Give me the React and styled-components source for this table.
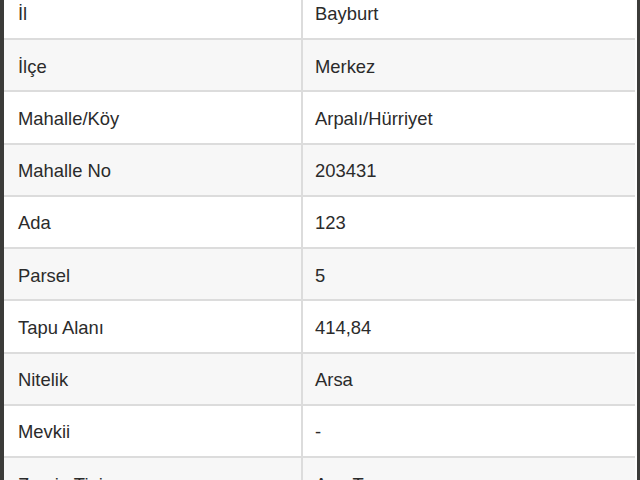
import React from 'react';
import styled, { createGlobalStyle } from 'styled-components';

const GlobalStyle = createGlobalStyle`
  html, body {
    margin: 0;
    padding: 0;
    background: #3b3b39;
    overflow: hidden;
  }
`;

const Frame = styled.div`
  width: 640px;
  height: 480px;
  box-sizing: border-box;
  padding: 0 3px 0 4px;
  overflow: hidden;
`;

const Table = styled.div`
  margin-top: -12.25px;
  background: #fdfdfd;
  font-family: 'Liberation Sans', Arial, sans-serif;
  font-size: 18.4px;
  color: #2b2b2b;
`;

const Row = styled.div`
  display: grid;
  grid-template-columns: 297px 1fr;
  height: 52.25px;
  box-sizing: border-box;
  border-bottom: 2px solid #dcdcdc;
  background: ${(p) => (p.$shaded ? '#f7f7f7' : '#ffffff')};
  margin-right: 2px;
`;

const Cell = styled.div`
  display: flex;
  align-items: center;
  padding-top: 3px;
  padding-left: ${(p) => (p.$value ? '12px' : '14px')};
  border-left: ${(p) => (p.$value ? '2px solid #dcdcdc' : 'none')};
  white-space: nowrap;
`;

const rows = [
  ['İl', 'Bayburt'],
  ['İlçe', 'Merkez'],
  ['Mahalle/Köy', 'Arpalı/Hürriyet'],
  ['Mahalle No', '203431'],
  ['Ada', '123'],
  ['Parsel', '5'],
  ['Tapu Alanı', '414,84'],
  ['Nitelik', 'Arsa'],
  ['Mevkii', '-'],
  ['Zemin Tipi', 'Ana Taşınmaz'],
];

export default function App() {
  return (
    <Frame>
      <GlobalStyle />
      <Table>
        {rows.map(([label, value], i) => (
          <Row key={label} $shaded={i % 2 === 1}>
            <Cell>{label}</Cell>
            <Cell $value>{value}</Cell>
          </Row>
        ))}
      </Table>
    </Frame>
  );
}
